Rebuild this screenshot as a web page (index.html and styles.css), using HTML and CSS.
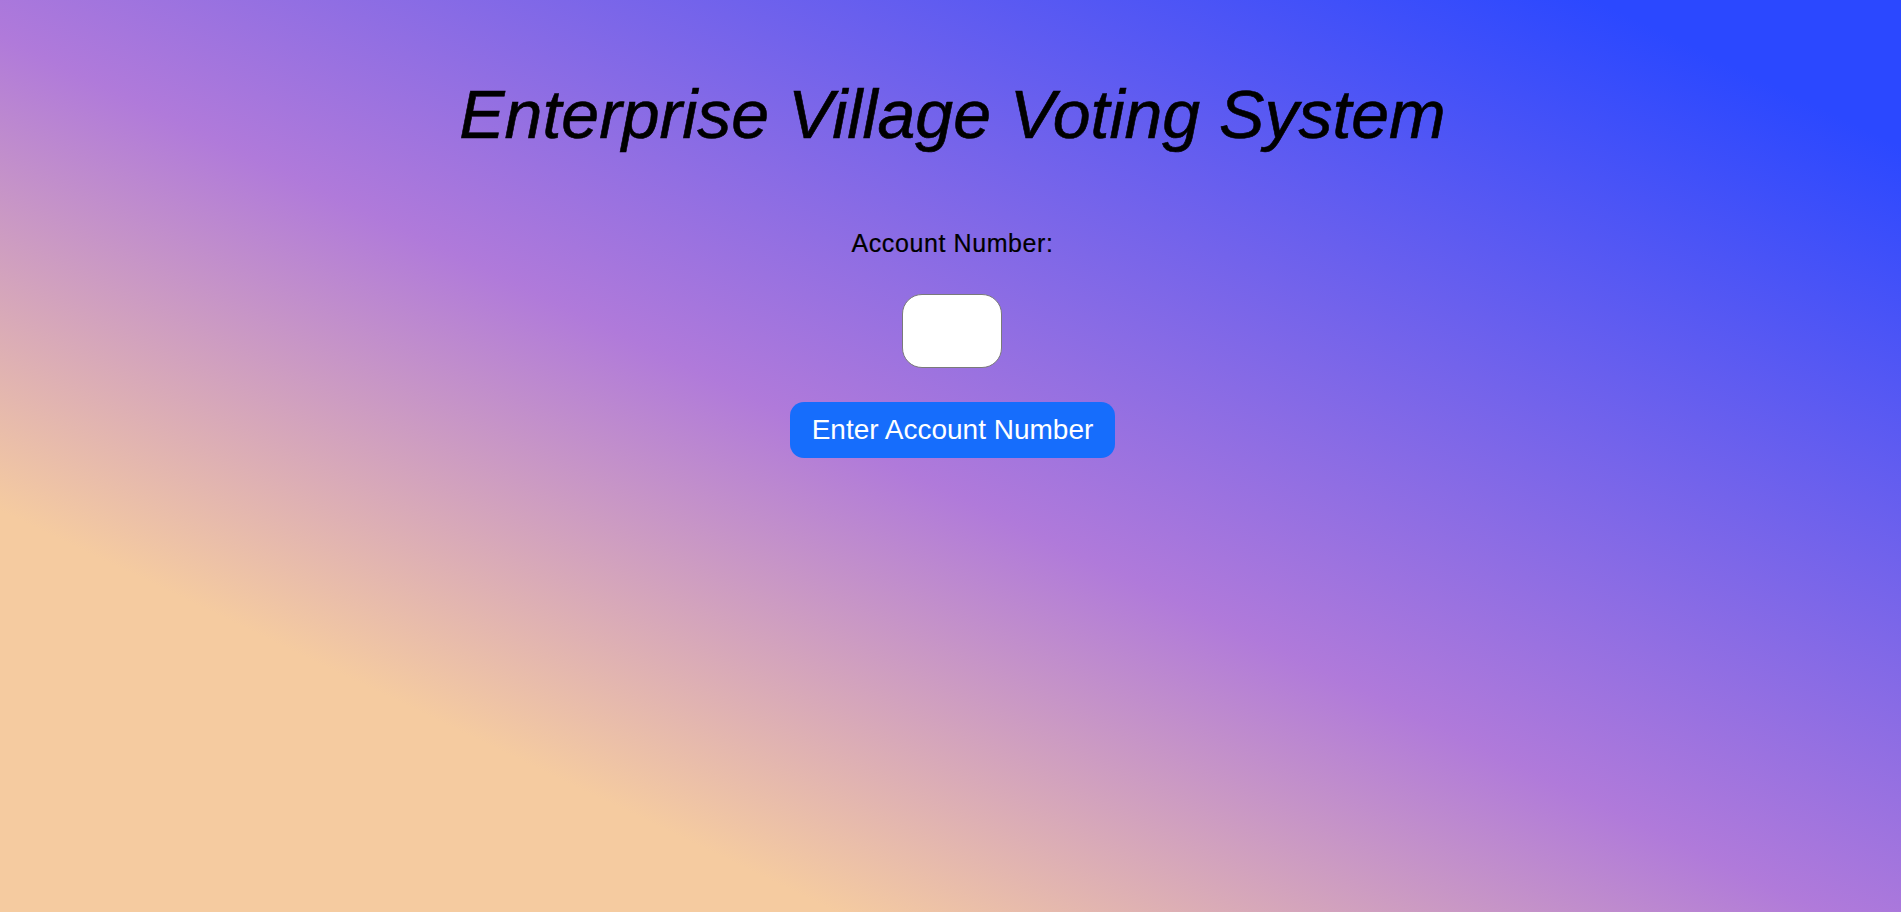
FILE: index.html
```html
<!DOCTYPE html>
<html lang="en">
<head>
<meta charset="utf-8">
<title>Enterprise Village Voting System</title>
<link rel="stylesheet" href="styles.css">
</head>
<body>
<main class="page">
  <h1 class="title">Enterprise Village Voting System</h1>
  <form class="login" onsubmit="return false;">
    <label class="label" for="acct">Account Number:</label>
    <input class="acct-input" id="acct" type="text">
    <button class="submit" type="submit">Enter Account Number</button>
  </form>
</main>
</body>
</html>
```

FILE: styles.css
```css
html, body {
  margin: 0;
  padding: 0;
  height: 100%;
}

body {
  background: linear-gradient(to top right, #f5cba0 22%, #b07ada 48%, #2b48ff 92%);
  font-family: "Liberation Sans", Arial, sans-serif;
  color: #000;
}

.page {
  min-height: 100%;
  box-sizing: border-box;
  padding-top: 75px;
  padding-left: 4px;
  display: flex;
  flex-direction: column;
  align-items: center;
}

.title {
  margin: 0;
  font-size: 68px;
  font-style: italic;
  font-weight: normal;
  -webkit-text-stroke: 0.6px #000;
  line-height: 78px;
  text-align: center;
}

.login {
  margin-top: 76px;
  display: flex;
  flex-direction: column;
  align-items: center;
}

.label {
  font-size: 25px;
  line-height: 29px;
  letter-spacing: 0.6px;
  -webkit-text-stroke: 0.2px #000;
}

.acct-input {
  margin-top: 36px;
  width: 100px;
  height: 74px;
  box-sizing: border-box;
  border: 1px solid #7a7a7a;
  border-radius: 20px;
  background: #fff;
  outline: none;
  padding: 0 8px;
  font-size: 20px;
}

.submit {
  margin-top: 34px;
  height: 56px;
  padding: 0 22px;
  border: none;
  border-radius: 14px;
  background: #166dfc;
  color: #fff;
  font-family: "Liberation Sans", Arial, sans-serif;
  font-size: 28px;
  cursor: pointer;
}
```
